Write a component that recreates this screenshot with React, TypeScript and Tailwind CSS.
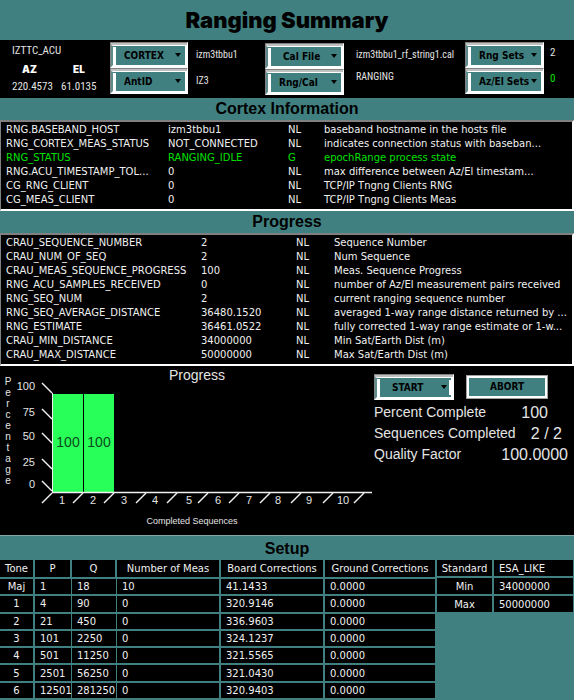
import type { ReactNode } from "react";

type Row = [string, string, string, string];

const cortexRows: Row[] = [
  ["RNG.BASEBAND_HOST", "izm3tbbu1", "NL", "baseband hostname in the hosts file"],
  ["RNG_CORTEX_MEAS_STATUS", "NOT_CONNECTED", "NL", "indicates connection status with baseban..."],
  ["RNG_STATUS", "RANGING_IDLE", "G", "epochRange process state"],
  ["RNG.ACU_TIMESTAMP_TOL...", "0", "NL", "max difference between Az/El timestam..."],
  ["CG_RNG_CLIENT", "0", "NL", "TCP/IP Tngng Clients RNG"],
  ["CG_MEAS_CLIENT", "0", "NL", "TCP/IP Tngng Clients Meas"],
];

const progressRows: Row[] = [
  ["CRAU_SEQUENCE_NUMBER", "2", "NL", "Sequence Number"],
  ["CRAU_NUM_OF_SEQ", "2", "NL", "Num Sequence"],
  ["CRAU_MEAS_SEQUENCE_PROGRESS", "100", "NL", "Meas. Sequence Progress"],
  ["RNG_ACU_SAMPLES_RECEIVED", "0", "NL", "number of Az/El measurement pairs received"],
  ["RNG_SEQ_NUM", "2", "NL", "current ranging sequence number"],
  ["RNG_SEQ_AVERAGE_DISTANCE", "36480.1520", "NL", "averaged 1-way range distance returned by ..."],
  ["RNG_ESTIMATE", "36461.0522", "NL", "fully corrected 1-way range estimate or 1-w..."],
  ["CRAU_MIN_DISTANCE", "34000000", "NL", "Min Sat/Earth Dist (m)"],
  ["CRAU_MAX_DISTANCE", "50000000", "NL", "Max Sat/Earth Dist (m)"],
];

const toneRows = [
  ["Maj", "1", "18", "10", "41.1433", "0.0000"],
  ["1", "4", "90", "0", "320.9146", "0.0000"],
  ["2", "21", "450", "0", "336.9603", "0.0000"],
  ["3", "101", "2250", "0", "324.1237", "0.0000"],
  ["4", "501", "11250", "0", "321.5565", "0.0000"],
  ["5", "2501", "56250", "0", "321.0430", "0.0000"],
  ["6", "12501", "281250", "0", "320.9403", "0.0000"],
];

const toneHeads = ["Tone", "P", "Q", "Number of Meas", "Board Corrections", "Ground Corrections"];

function Menu({ label, grip = false, inset = false }: { label: string; grip?: boolean; inset?: boolean }) {
  return (
    <div className="h-[26px] w-full border border-[#808080] border-r-white border-b-white bg-[#c0c0c0] pt-[2px]">
      <div className="relative flex h-full border-2 border-t border-l-[#5d8c8c] border-white bg-[#408080]">
        <span className="mt-px w-[3px] shrink-0 bg-white" />
        <select
          aria-label={label}
          className={`h-full min-w-0 flex-1 appearance-none bg-transparent text-left font-['DejaVu_Sans_Condensed','DejaVu_Sans',sans-serif] text-[10px] leading-[18px] font-bold text-black outline-none ${inset ? "pl-3" : "pl-2"}`}
        >
          <option>{label}</option>
        </select>
        <svg viewBox="0 0 6 4" className="pointer-events-none absolute top-[7px] right-1 h-1 w-1.5" aria-hidden="true">
          <path d="M0 0H6L3 4Z" fill="#000" />
        </svg>
        {grip && <span className="my-0.5 w-0.5 shrink-0 bg-white" />}
      </div>
    </div>
  );
}

function Band({ children }: { children: ReactNode }) {
  return (
    <h2 className="bg-[#408080] text-center font-['Liberation_Sans',Arial,sans-serif] text-[16px] leading-[22px] font-bold text-black">
      {children}
    </h2>
  );
}

function StatusList({ rows, wide = false }: { rows: Row[]; wide?: boolean }) {
  return (
    <div className="border-t-2 border-r-2 border-b-2 border-l border-[#808080] border-r-white border-b-white px-[5px] pt-px pb-[2px]">
      <table className="w-full table-fixed text-left leading-[14px] whitespace-nowrap">
        <colgroup>
          <col className={wide ? "w-[195px]" : "w-[162px]"} />
          <col className={wide ? "w-[95px]" : "w-[120px]"} />
          <col className={wide ? "w-[38px]" : "w-[36px]"} />
          <col />
        </colgroup>
        <tbody>
          {rows.map((r) => (
            <tr key={r[0]} className={r[2] === "G" ? "text-[#00e000]" : ""}>
              {r.map((c, i) => (
                <td key={i} className="p-0">
                  {c}
                </td>
              ))}
            </tr>
          ))}
        </tbody>
      </table>
    </div>
  );
}

const yTicks = [
  { v: "100", y: 16 },
  { v: "75", y: 42 },
  { v: "50", y: 66 },
  { v: "25", y: 92 },
  { v: "0", y: 114 },
];
const xTicks = [52, 83, 114, 146, 177, 208, 239, 270, 301, 333, 364];
const xLabels = [62, 93, 124, 155, 189, 218, 249, 278, 309, 343];

function Chart() {
  return (
    <svg viewBox="0 0 374 166" className="w-[374px] shrink-0 font-['Liberation_Sans',Arial,sans-serif]" role="img" aria-label="Progress">
      <g fill="#e4e4e4">
        <text x="197" y="13" fontSize="14" textAnchor="middle">Progress</text>
        {"Percentage".split("").map((c, i) => (
          <text key={i} x="8" y={18 + i * 11} fontSize="10" textAnchor="middle">{c}</text>
        ))}
        {yTicks.map((t) => (
          <text key={t.v} x="35" y={t.y + 7} fontSize="11" textAnchor="end">{t.v}</text>
        ))}
        {xLabels.map((x, i) => (
          <text key={x} x={x} y="137" fontSize="11" textAnchor="middle">{i + 1}</text>
        ))}
        <text x="192" y="157" fontSize="9" textAnchor="middle">Completed Sequences</text>
      </g>
      <rect x="53" y="27" width="30" height="98" fill="#28ff58" />
      <rect x="84" y="27" width="30" height="98" fill="#28ff58" />
      <g fill="#0a4a18" fontSize="14" textAnchor="middle">
        <text x="68" y="80">100</text>
        <text x="99" y="80">100</text>
      </g>
      <g stroke="#f0f0f0" strokeWidth="1.4">
        {yTicks.map((t) => (
          <line key={t.v} x1="42" y1={t.y} x2="52" y2={t.y + 10} />
        ))}
        {xTicks.map((x) => (
          <line key={x} x1={x} y1="126" x2={x - 10} y2="136" />
        ))}
        <line x1="52.5" y1="26" x2="52.5" y2="126" strokeWidth="1" />
        <line x1="52" y1="125.5" x2="372" y2="125.5" />
      </g>
    </svg>
  );
}

export default function App() {
  const narrow = "font-['Liberation_Sans_Narrow','Roboto_Condensed','Liberation_Sans',sans-serif] leading-[14px] text-[#e4e4e4]";
  return (
    <main className="bg-black font-['DejaVu_Sans',Verdana,sans-serif] text-[10px] text-[#f0f0f0]">
      <h1 className="bg-[#408080] text-center font-['Inter','Liberation_Sans',sans-serif] text-[22px] leading-[40px] font-black text-black">
        Ranging Summary
      </h1>

      <section className="grid h-[58px] grid-cols-[110fr_78fr_77fr_79fr_121fr_79fr_30fr] items-start pt-[2px]">
        <div className={`${narrow} pt-0.5 pl-3 text-[11px]`}>
          <div>IZTTC_ACU</div>
          <div className="grid w-[84px] grid-cols-[49px_1fr]">
            <b className="pt-1 pl-2.5 font-['Inter',sans-serif] text-[10px] font-black text-white">AZ</b>
            <b className="pt-1 pl-3 font-['Inter',sans-serif] text-[10px] font-black text-white">EL</b>
            <span className="pt-1">220.4573</span>
            <span className="pt-1">61.0135</span>
          </div>
        </div>
        <div>
          <Menu label="CORTEX" />
          <Menu label="AntID" />
        </div>
        <div className={`${narrow} flex flex-col gap-3 pt-1.5 pl-2 text-[10px]`}>
          <span>izm3tbbu1</span>
          <span>IZ3</span>
        </div>
        <div className="pt-px">
          <Menu label="Cal File" inset />
          <Menu label="Rng/Cal" />
        </div>
        <div className={`${narrow} flex flex-col gap-2 pt-1.5 pl-3 text-[10px]`}>
          <span>izm3tbbu1_rf_string1.cal</span>
          <span>RANGING</span>
        </div>
        <div>
          <Menu label="Rng Sets" />
          <Menu label="Az/El Sets" />
        </div>
        <div className={`${narrow} flex flex-col gap-3 pt-1 pl-1.5 text-[11px]`}>
          <span>2</span>
          <span className="text-[#00e000]">0</span>
        </div>
      </section>

      <Band>Cortex Information</Band>
      <StatusList rows={cortexRows} />
      <Band>Progress</Band>
      <StatusList rows={progressRows} wide />

      <section className="flex items-start pt-px pb-0.5">
        <Chart />
        <div className="min-w-0 flex-1 pt-[7px] pr-1.5 font-['Liberation_Sans',Arial,sans-serif] text-[14px] text-[#e4e4e4]">
          <div className="mb-0.5 flex items-center gap-3">
            <div className="w-[80px]">
              <Menu label="START" grip inset />
            </div>
            <button
              type="button"
              className="h-6 w-[82px] border border-[#a0a0a0] bg-[#408080] font-['DejaVu_Sans_Condensed','DejaVu_Sans',sans-serif] text-[10px] leading-none font-bold text-black ring-2 ring-white ring-inset"
            >
              ABORT
            </button>
          </div>
          <dl className="leading-[21px]">
            <div className="flex justify-between">
              <dt>Percent Complete</dt>
              <dd className="pr-5 text-[16px]">100</dd>
            </div>
            <div className="flex justify-between">
              <dt>Sequences Completed</dt>
              <dd className="pr-1.5 text-[16px]">2 / 2</dd>
            </div>
            <div className="flex justify-between">
              <dt>Quality Factor</dt>
              <dd className="text-[16px]">100.0000</dd>
            </div>
          </dl>
        </div>
      </section>

      <section className="border-t border-[#80a8a8] bg-[#408080]">
        <div className="pt-0.5">
          <Band>Setup</Band>
        </div>
        <div className="grid grid-cols-[437fr_137fr] items-start pb-0.5">
          <table className="h-[140px] w-full table-fixed border-separate border-spacing-0 leading-[15px] whitespace-nowrap">
            <colgroup>
              <col className="w-[35px]" />
              <col className="w-[37px]" />
              <col className="w-[45px]" />
              <col className="w-[104px]" />
              <col className="w-[104px]" />
              <col className="w-[112px]" />
            </colgroup>
            <thead>
              <tr>
                {toneHeads.map((h) => (
                  <th key={h} className="h-[19px] border-r-2 border-b-2 border-[#408080] bg-black p-0 font-normal">
                    {h}
                  </th>
                ))}
              </tr>
            </thead>
            <tbody>
              {toneRows.map((r) => (
                <tr key={r[0]}>
                  {r.map((c, i) => (
                    <td key={i} className={`border-b-2 border-[#408080] bg-black py-0 pr-0 ${i === 1 || i === 2 ? "border-r" : "border-r-2"} ${i === 0 ? "pl-0 text-center" : "pl-[5px]"}`}>
                      {c}
                    </td>
                  ))}
                </tr>
              ))}
            </tbody>
          </table>
          <table className="w-full table-fixed border-separate border-spacing-0 leading-[15px] whitespace-nowrap">
            <colgroup>
              <col className="w-[57px]" />
              <col className="w-[80px]" />
            </colgroup>
            <tbody>
              {[
                ["Standard", "ESA_LIKE"],
                ["Min", "34000000"],
                ["Max", "50000000"],
              ].map(([k, v]) => (
                <tr key={k} className="h-[18px]">
                  <th className="border-r-2 border-b-2 border-[#408080] bg-black p-0 font-normal">{k}</th>
                  <td className="border-r border-b-2 border-[#408080] bg-black py-0 pr-0 pl-[5px]">{v}</td>
                </tr>
              ))}
            </tbody>
          </table>
        </div>
      </section>
    </main>
  );
}
